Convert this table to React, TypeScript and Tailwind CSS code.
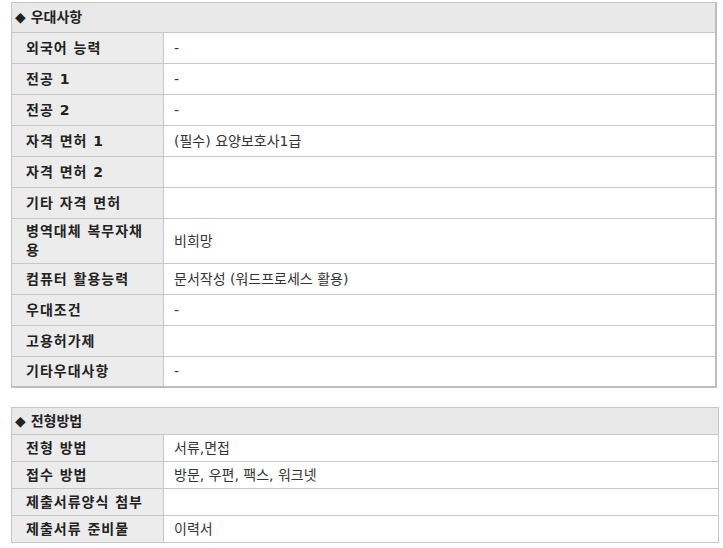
type Row = {
  label: string;
  value: string;
  tall?: boolean;
};

const benefits: Row[] = [
  { label: "외국어 능력", value: "-" },
  { label: "전공 1", value: "-" },
  { label: "전공 2", value: "-" },
  { label: "자격 면허 1", value: "(필수) 요양보호사1급" },
  { label: "자격 면허 2", value: "" },
  { label: "기타 자격 면허", value: "" },
  { label: "병역대체 복무자채용", value: "비희망", tall: true },
  { label: "컴퓨터 활용능력", value: "문서작성 (워드프로세스 활용)" },
  { label: "우대조건", value: "-" },
  { label: "고용허가제", value: "" },
  { label: "기타우대사항", value: "-" },
];

const screening: Row[] = [
  { label: "전형 방법", value: "서류,면접" },
  { label: "접수 방법", value: "방문, 우편, 팩스, 워크넷" },
  { label: "제출서류양식 첨부", value: "" },
  { label: "제출서류 준비물", value: "이력서" },
];

const font = { fontFamily: '"DejaVu Sans", "Noto Sans CJK KR", sans-serif' };

const App = () => {
  return (
    <main className="min-h-screen w-[723px] bg-white pt-[2px] pl-[11px] text-[14px] text-[#222]" style={font}>
      {/* 우대사항 */}
      <section className="w-[706px] border-t border-l border-r-2 border-b-2 border-t-[#c6c6c6] border-l-[#c6c6c6] border-r-[#bdbdbd] border-b-[#bdbdbd]">
        <div className="flex h-[30px] items-center border-b border-[#c6c6c6] bg-[#e9e9e9] pl-[3px] font-bold">
          ◆ 우대사항
        </div>
        {benefits.map((row, i) => (
          <div
            key={row.label}
            className={`flex ${row.tall ? "h-[45px]" : i === benefits.length - 1 ? "h-[29px]" : "h-[31px]"} ${
              i === benefits.length - 1 ? "" : "border-b border-[#c6c6c6]"
            }`}
          >
            <div className="flex w-[152px] shrink-0 items-center border-r border-[#c6c6c6] bg-[#ececec] pl-[14px] pr-[18px] font-bold leading-[19px] tracking-[1px]">
              {row.label}
            </div>
            <div className="flex items-center pl-[10px] text-[#333]">{row.value}</div>
          </div>
        ))}
      </section>

      {/* 전형방법 */}
      <section className="mt-[19px] w-[708px] border border-[#c6c6c6]">
        <div className="flex h-[27px] items-center border-b border-[#c6c6c6] bg-[#e9e9e9] pl-[3px] font-bold">
          ◆ 전형방법
        </div>
        {screening.map((row, i) => (
          <div
            key={row.label}
            className={`flex ${i === screening.length - 1 ? "h-[26px]" : "h-[27px] border-b border-[#c6c6c6]"}`}
          >
            <div className="flex w-[152px] shrink-0 items-center border-r border-[#c6c6c6] bg-[#ececec] pl-[14px] font-bold tracking-[1px]">
              {row.label}
            </div>
            <div className="flex items-center pl-[10px] text-[#333]">{row.value}</div>
          </div>
        ))}
      </section>
    </main>
  );
};

export default App;
